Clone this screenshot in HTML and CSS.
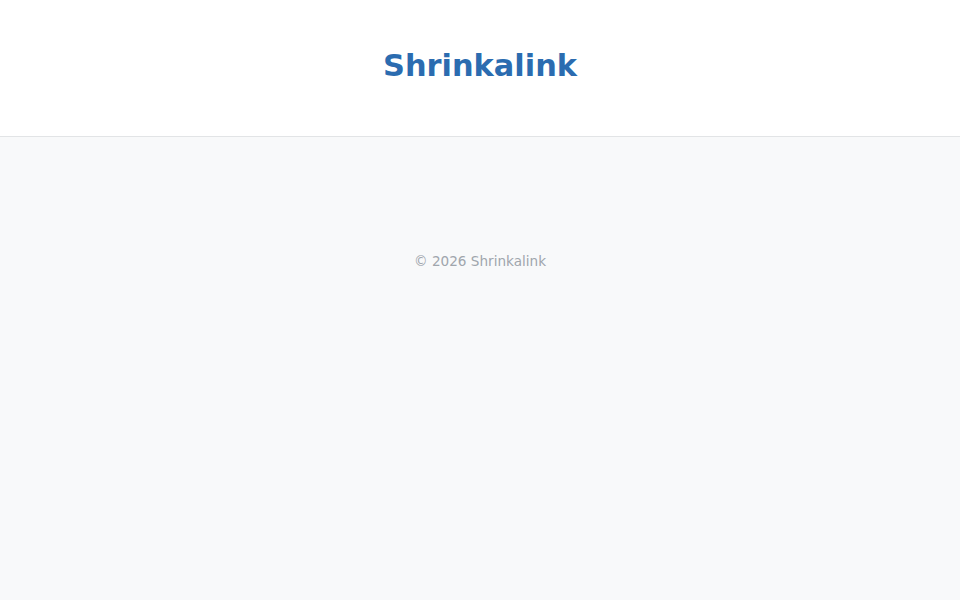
FILE: index.html
```html
<!DOCTYPE html>
<html>
<head>
<meta charset="utf-8">
<link rel="stylesheet" href="styles.css">
</head>
<body>
<header class="site-header">
  <h1 class="brand">Shrinkalink</h1>
</header>
<main class="content"></main>
<footer class="site-footer">© 2026 Shrinkalink</footer>
</body>
</html>
```
FILE: styles.css
```css
html, body {
  margin: 0;
  padding: 0;
}
body {
  background: #f8f9fa;
  font-family: "DejaVu Sans", sans-serif;
  min-height: 600px;
}
.site-header {
  background: #ffffff;
  border-bottom: 1px solid #e2e4e6;
  height: 137px;
  box-sizing: border-box;
  padding-bottom: 6px;
  display: flex;
  align-items: center;
  justify-content: center;
}
.brand {
  margin: 0;
  font-size: 30.4px;
  font-weight: bold;
  color: #2b6cb0;
}
.content {
  height: 101px;
}
.site-footer {
  text-align: center;
  font-size: 13.6px;
  color: #a0a6ad;
  padding-top: 15px;
}
```
